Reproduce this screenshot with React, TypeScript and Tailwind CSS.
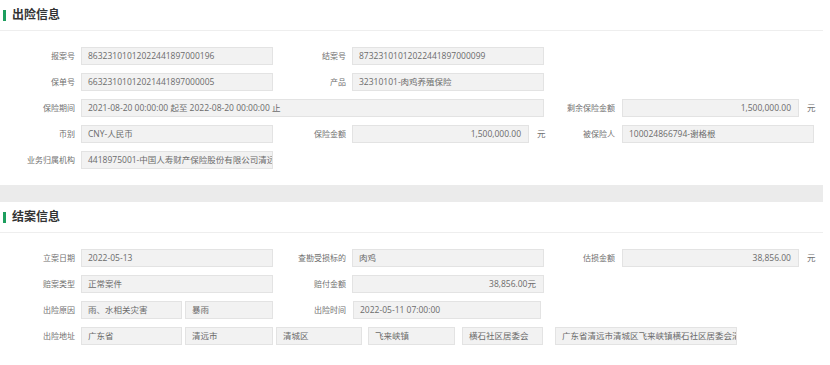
import React from 'react';

const font = { fontFamily: '"Open Sans", "Noto Sans CJK SC", sans-serif' };

function Box({ w, children, right = false }: { w: string; children?: React.ReactNode; right?: boolean }) {
    return (
        <div
            className={`${w} h-[18px] shrink-0 bg-[#f2f2f2] border border-[#e3e3e3] text-[8.5px] text-[#6b6b6b] leading-[16px] whitespace-nowrap overflow-hidden ${right ? 'text-right pr-[7px]' : 'pl-[6px]'}`}
        >
            {children}
        </div>
    );
}

function Label({ w, children }: { w: string; children: React.ReactNode }) {
    return <div className={`${w} shrink-0 text-right text-[8px] text-[#707070] leading-[18px] whitespace-nowrap`}>{children}</div>;
}

function Yuan() {
    return <span className="ml-[8px] text-[8.5px] text-[#707070] leading-[18px]">元</span>;
}

function SectionHeader({ title }: { title: string }) {
    return (
        <div className="h-[31px] border-b border-[#eeeeee] flex items-center pl-[3px]">
            <span className="w-[3px] h-[11px] bg-[#1d9e5e]"></span>
            <h2 className="ml-[6px] text-[12px] font-bold text-[#333333] leading-none">{title}</h2>
        </div>
    );
}

export default function App() {
    return (
        <div className="w-[823px] bg-white" style={font}>
            {/* 出险信息 */}
            <SectionHeader title="出险信息" />
            <div className="pt-[16px] pb-[16px] flex flex-col gap-[8px]">
                <div className="flex h-[18px]">
                    <div className="w-[273px] flex">
                        <Label w="w-[75px]">报案号</Label>
                        <div className="ml-[6px]"><Box w="w-[192px]">86323101012022441897000196</Box></div>
                    </div>
                    <div className="w-[271px] flex">
                        <Label w="w-[73px]">结案号</Label>
                        <div className="ml-[6px]"><Box w="w-[192px]">87323101012022441897000099</Box></div>
                    </div>
                </div>
                <div className="flex h-[18px]">
                    <div className="w-[273px] flex">
                        <Label w="w-[75px]">保单号</Label>
                        <div className="ml-[6px]"><Box w="w-[192px]">66323101012021441897000005</Box></div>
                    </div>
                    <div className="w-[271px] flex">
                        <Label w="w-[73px]">产品</Label>
                        <div className="ml-[6px]"><Box w="w-[192px]">32310101-肉鸡养殖保险</Box></div>
                    </div>
                </div>
                <div className="flex h-[18px]">
                    <div className="w-[544px] flex">
                        <Label w="w-[75px]">保险期间</Label>
                        <div className="ml-[6px]"><Box w="w-[463px]">2021-08-20 00:00:00 起至 2022-08-20 00:00:00 止</Box></div>
                    </div>
                    <div className="flex">
                        <Label w="w-[71px]">剩余保险金额</Label>
                        <div className="ml-[7px]"><Box w="w-[177px]" right>1,500,000.00</Box></div>
                        <Yuan />
                    </div>
                </div>
                <div className="flex h-[18px]">
                    <div className="w-[273px] flex">
                        <Label w="w-[75px]">币别</Label>
                        <div className="ml-[6px]"><Box w="w-[192px]">CNY-人民币</Box></div>
                    </div>
                    <div className="w-[271px] flex">
                        <Label w="w-[73px]">保险金额</Label>
                        <div className="ml-[6px]"><Box w="w-[177px]" right>1,500,000.00</Box></div>
                        <Yuan />
                    </div>
                    <div className="flex">
                        <Label w="w-[71px]">被保险人</Label>
                        <div className="ml-[7px]"><Box w="w-[192px]">100024866794-谢格根</Box></div>
                    </div>
                </div>
                <div className="flex h-[18px]">
                    <div className="w-[273px] flex">
                        <Label w="w-[75px]">业务归属机构</Label>
                        <div className="ml-[6px]"><Box w="w-[192px]">4418975001-中国人寿财产保险股份有限公司清远</Box></div>
                    </div>
                </div>
            </div>

            <div className="h-[17px] bg-[#ebebeb]"></div>

            {/* 结案信息 */}
            <SectionHeader title="结案信息" />
            <div className="pt-[16px] pb-[16px] flex flex-col gap-[8px]">
                <div className="flex h-[18px]">
                    <div className="w-[273px] flex">
                        <Label w="w-[75px]">立案日期</Label>
                        <div className="ml-[6px]"><Box w="w-[192px]">2022-05-13</Box></div>
                    </div>
                    <div className="w-[271px] flex">
                        <Label w="w-[73px]">查勘受损标的</Label>
                        <div className="ml-[6px]"><Box w="w-[192px]">肉鸡</Box></div>
                    </div>
                    <div className="flex">
                        <Label w="w-[71px]">估损金额</Label>
                        <div className="ml-[7px]"><Box w="w-[177px]" right>38,856.00</Box></div>
                        <Yuan />
                    </div>
                </div>
                <div className="flex h-[18px]">
                    <div className="w-[273px] flex">
                        <Label w="w-[75px]">赔案类型</Label>
                        <div className="ml-[6px]"><Box w="w-[192px]">正常案件</Box></div>
                    </div>
                    <div className="w-[271px] flex">
                        <Label w="w-[73px]">赔付金额</Label>
                        <div className="ml-[6px]"><Box w="w-[192px]" right>38,856.00元</Box></div>
                    </div>
                </div>
                <div className="flex h-[18px]">
                    <div className="w-[273px] flex">
                        <Label w="w-[75px]">出险原因</Label>
                        <div className="ml-[6px]"><Box w="w-[101px]">雨、水相关灾害</Box></div>
                        <div className="ml-[3px]"><Box w="w-[88px]">暴雨</Box></div>
                    </div>
                    <div className="w-[271px] flex">
                        <Label w="w-[73px]">出险时间</Label>
                        <div className="ml-[7px]"><Box w="w-[188px]">2022-05-11 07:00:00</Box></div>
                    </div>
                </div>
                <div className="flex h-[18px]">
                    <Label w="w-[75px]">出险地址</Label>
                    <div className="ml-[6px]"><Box w="w-[101px]">广东省</Box></div>
                    <div className="ml-[3px]"><Box w="w-[88px]">清远市</Box></div>
                    <div className="ml-[3px]"><Box w="w-[86px]">清城区</Box></div>
                    <div className="ml-[6px]"><Box w="w-[87px]">飞来峡镇</Box></div>
                    <div className="ml-[7px]"><Box w="w-[81px]">横石社区居委会</Box></div>
                    <div className="ml-[12px]"><Box w="w-[182px]">广东省清远市清城区飞来峡镇横石社区居委会清远</Box></div>
                </div>
            </div>
        </div>
    );
}
